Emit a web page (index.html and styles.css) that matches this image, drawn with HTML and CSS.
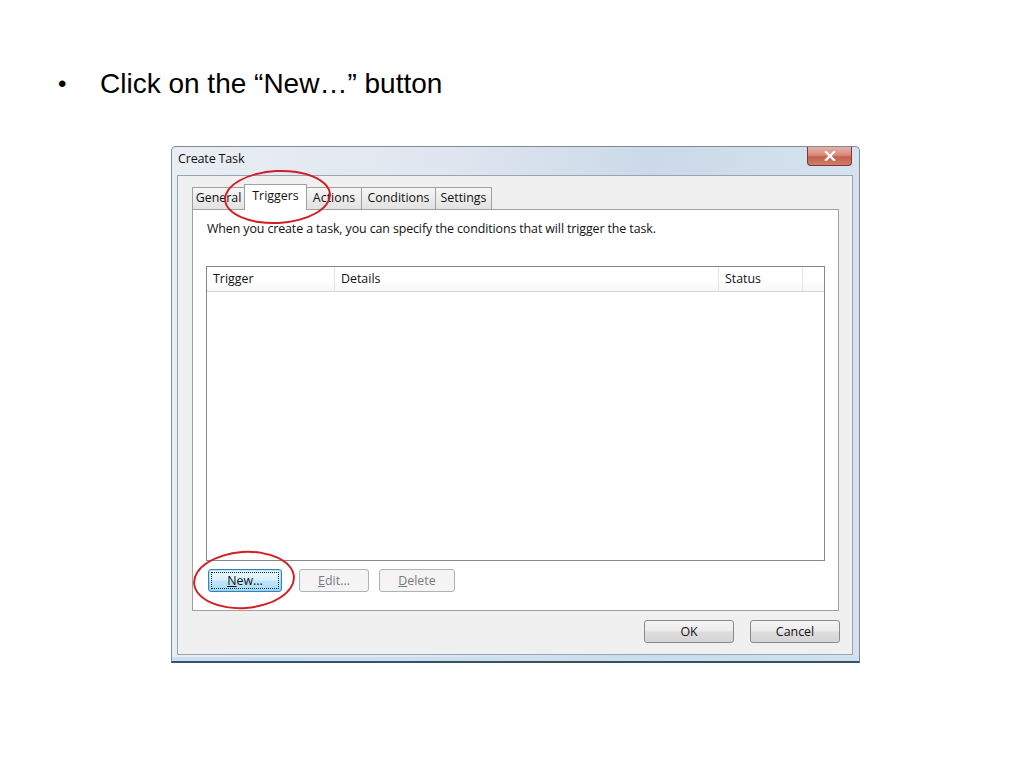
FILE: index.html
```html
<!DOCTYPE html>
<html lang="en">
<head>
  <meta charset="UTF-8">
  <title>Click on the New button</title>
  <link rel="stylesheet" href="styles.css">
</head>
<body>

  <div class="slide">
    <ul class="bullets">
      <li>Click on the “New…” button</li>
    </ul>

    <div class="window">
      <div class="titlebar">
        <span class="title">Create Task</span>
        <span class="close-btn">
          <svg width="14" height="10" viewBox="0 0 14 10">
            <path d="M3 1 L11 9 M11 1 L3 9" stroke="#fff" stroke-width="2.4" stroke-linecap="square"/>
          </svg>
        </span>
      </div>

      <div class="client">
        <div class="tabs">
          <span class="tab t-general">General</span>
          <span class="tab t-triggers active">Triggers</span>
          <span class="tab t-actions">Actions</span>
          <span class="tab t-conditions">Conditions</span>
          <span class="tab t-settings">Settings</span>
        </div>

        <div class="tab-panel">
          <p class="intro">When you create a task, you can specify the conditions that will trigger the task.</p>

          <div class="listview">
            <div class="list-header">
              <span class="col col-trigger">Trigger</span>
              <span class="col col-details">Details</span>
              <span class="col col-status">Status</span>
              <span class="col col-rest"></span>
            </div>
            <div class="list-body"></div>
          </div>

          <div class="list-buttons">
            <button class="btn focused"><span class="focus-ring"><u>N</u>ew...</span></button>
            <button class="btn disabled btn-edit"><u>E</u>dit...</button>
            <button class="btn disabled btn-delete"><u>D</u>elete</button>
          </div>
        </div>

        <div class="dialog-buttons">
          <button class="btn wide">OK</button>
          <button class="btn wide">Cancel</button>
        </div>
      </div>

      <!-- red annotation circles -->
      <span class="mark mark-tab"></span>
      <span class="mark mark-new"></span>
    </div>
  </div>

</body>
</html>
```

FILE: styles.css
```css
body {
  margin: 0;
  background: #fff;
  font-family: "Liberation Sans", Arial, sans-serif;
}

.slide {
  width: 1024px;
  height: 768px;
  overflow: hidden;
}

.bullets {
  margin: 0;
  padding: 66px 0 0 100px;
  list-style: none;
  font-size: 28px;
  color: #000;
}
.bullets li {
  position: relative;
  line-height: 36px;
}
.bullets li::before {
  content: "\2022";
  position: absolute;
  left: -42px;
  top: 0;
  font-size: 24px;
}

/* dialog window */
.window {
  position: relative;
  box-sizing: border-box;
  width: 689px;
  margin: 44px 0 0 171px;
  background: linear-gradient(to right, #e9eef4 0%, #dfe6ef 40%, #cbd9e8 70%, #d6e2ee 100%);
  border: 1px solid #7d8a99;
  border-bottom: 2px solid #3c5064;
  border-radius: 5px 5px 0 0;
  padding: 0 6px 6px 5px;
  box-shadow: inset 0 -4px 0 #c7e0f2;
  font-family: "Open Sans", "Noto Sans", sans-serif;
  font-size: 12.4px;
  color: #111;
}

.titlebar {
  display: flex;
  justify-content: space-between;
  align-items: flex-start;
  height: 28px;
}
.title {
  padding: 3px 0 0 1px;
  font-size: 12.6px;
  letter-spacing: -0.2px;
}
.close-btn {
  display: flex;
  align-items: center;
  justify-content: center;
  width: 43px;
  height: 18px;
  margin-right: 1px;
  border: 1px solid #7a3a33;
  border-top: none;
  border-radius: 0 0 4px 4px;
  background: linear-gradient(#e8b2a6 0%, #d98a7a 45%, #c4604c 55%, #d07d6b 100%);
}

.client {
  background: #f0f0f0;
  border: 1px solid #98a4b0;
  padding: 7px 13px 11px 14px;
}

/* tabs */
.tabs {
  display: flex;
  align-items: flex-end;
  height: 26px;
  position: relative;
  z-index: 1;
}
.tab {
  box-sizing: border-box;
  text-align: center;
  height: 22px;
  line-height: 20px;
  border: 1px solid #a0a0a0;
  border-bottom: none;
  border-right: none;
  background: linear-gradient(#f6f6f6, #e2e2e2);
}
.t-general    { width: 52px; }
.t-triggers   { width: 63px; }
.t-actions    { width: 54px; }
.t-conditions { width: 74px; }
.t-settings   { width: 57px; border-right: 1px solid #a0a0a0; }
.tab.active {
  height: 26px;
  line-height: 22px;
  background: #fff;
  border-right: 1px solid #a0a0a0;
  margin-bottom: -1px;
}
.tab.active + .tab {
  border-left: none;
}

.tab-panel {
  background: #fff;
  border: 1px solid #a0a0a0;
  height: 402px;
  padding: 0 13px;
  box-sizing: border-box;
}

.intro {
  margin: 9px 0 0 1px;
  line-height: 20px;
  letter-spacing: -0.1px;
}

/* list view */
.listview {
  margin-top: 27px;
  height: 295px;
  box-sizing: border-box;
  border: 1px solid #828790;
  display: flex;
  flex-direction: column;
}
.list-header {
  display: flex;
  height: 24px;
  border-bottom: 1px solid #d5d5d5;
  background: linear-gradient(#fff 60%, #f6f7f9);
}
.col {
  padding-left: 6px;
  line-height: 24px;
  border-right: 1px solid #e3e4e6;
}
.col-trigger { width: 121px; }
.col-details { width: 377px; }
.col-status  { width: 77px; }
.col-rest    { flex: 1; border-right: none; }
.list-body {
  flex: 1;
}

.list-buttons {
  display: flex;
  gap: 10px;
  margin-top: 8px;
  padding-left: 2px;
}

.btn {
  font-family: inherit;
  font-size: 12.4px;
  color: #111;
  height: 23px;
  border: 1px solid #707070;
  border-radius: 3px;
  background: linear-gradient(#f2f2f2 0%, #ebebeb 48%, #dddddd 52%, #cfcfcf 100%);
  padding: 0;
  cursor: default;
}
.btn.focused {
  width: 74px;
  border-color: #3c7fb1;
  box-shadow: inset 0 0 0 1px #48d4fd66;
  background: linear-gradient(#eaf6fd 0%, #d9f0fc 48%, #bee6fd 52%, #a7d9f5 100%);
  padding: 2px;
}
.focus-ring {
  display: block;
  height: 100%;
  line-height: 15px;
  border: 1px dotted #222;
  box-sizing: border-box;
}
.btn.disabled {
  color: #7a7a7a;
  border-color: #adb2b5;
  background: #f4f4f4;
}
.btn-edit {
  width: 70px;
  margin-left: 7px;
}
.btn-delete {
  width: 76px;
}

.dialog-buttons {
  display: flex;
  justify-content: flex-end;
  gap: 16px;
  margin-top: 9px;
  margin-right: -1px;
}
.btn.wide {
  width: 90px;
  border-color: #8a8a8a;
  background: linear-gradient(#f4f4f4 0%, #ebebeb 48%, #dedede 52%, #d4d4d4 100%);
}

/* annotation ellipses */
.mark {
  position: absolute;
  border: 2px solid #d21f26;
  border-radius: 50%;
  pointer-events: none;
  z-index: 2;
}
.mark-tab {
  left: 52px;
  top: 23px;
  width: 103px;
  height: 50px;
  transform: rotate(-3deg);
}
.mark-new {
  left: 21px;
  top: 404px;
  width: 98px;
  height: 54px;
  transform: rotate(-4deg);
}
```
